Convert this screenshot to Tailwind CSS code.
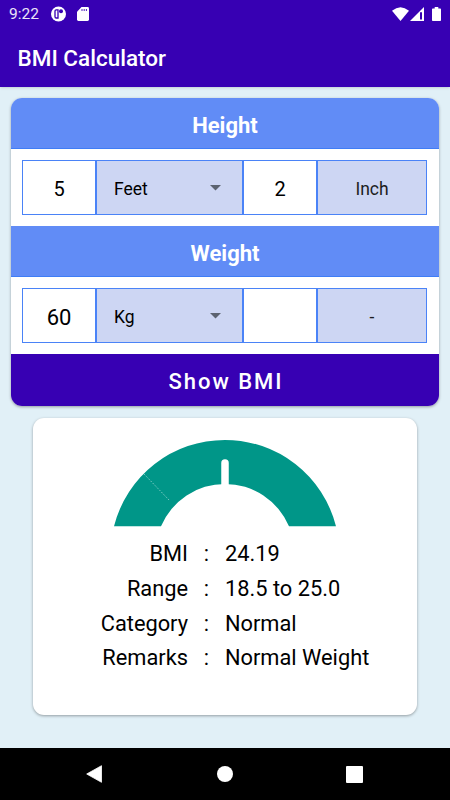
<!DOCTYPE html>
<html lang="en">
  <head>
    <meta charset="UTF-8" />
    <meta name="viewport" content="width=device-width, initial-scale=1.0" />
    <script src="https://cdn.jsdelivr.net/npm/@tailwindcss/browser@4"></script>
    <title>BMI Calculator</title>
  </head>
  <body class="font-[Roboto,sans-serif] bg-[#e1f0f7] text-black">
    <div class="flex flex-col w-[450px] h-[800px] overflow-hidden">
      <header class="h-[87px] shrink-0 bg-[#3700b3] text-white shadow-sm">
        <div class="flex items-center h-7 pl-[9px] pr-2">
          <span class="text-[15.5px] w-[41px] leading-7 text-white/90">9:22</span>
          <svg class="w-4 h-4" viewBox="0 0 16 16">
            <circle cx="8.5" cy="8" r="7.5" fill="#fff" />
            <path
              d="M8 3.8H6.2Q5 3.8 5 5V10.8Q5 12 6.2 12H8Z"
              fill="none"
              stroke="#3700b3"
              stroke-width="1.3"
            />
            <circle cx="11" cy="5.2" r="2" fill="#3700b3" />
          </svg>
          <svg class="w-3 h-[14px] ml-[11px]" viewBox="0 0 12 14">
            <path
              d="M4.5 0H10.6Q12 0 12 1.4V12.6Q12 14 10.6 14H1.4Q0 14 0 12.6V4.8Z"
              fill="#fff"
            />
            <path d="M5 2V4M7.2 2V4M9.4 2V4" stroke="#3700b3" stroke-width=".9" />
          </svg>
          <svg class="w-[17px] h-[14px] ml-auto" viewBox="0 0 17 14">
            <path d="M0 3.8Q8.5 -3.2 17 3.8L8.5 14Z" fill="#fff" />
          </svg>
          <svg class="w-[14px] h-[14px] ml-px" viewBox="0 0 14 14">
            <path d="M14 0V14H0Z" fill="#fff" />
            <path d="M10 5.2H12V12.5H10Z" fill="#3700b3" />
          </svg>
          <svg class="w-[9px] h-[14px] ml-2 mr-px" viewBox="0 0 9 14">
            <path
              d="M2.7 0H6.3V1.4H8.2Q9 1.4 9 2.2V13.2Q9 14 8.2 14H.8Q0 14 0 13.2V2.2Q0 1.4 .8 1.4H2.7Z"
              fill="#fff"
            />
          </svg>
        </div>
        <h1 class="pl-[17.5px] pt-[14px] text-[22.5px] leading-8 font-medium">
          BMI Calculator
        </h1>
      </header>

      <main class="flex flex-col items-center grow pt-[11px]">
        <section
          class="w-[428px] h-[308px] rounded-[11px] overflow-hidden bg-white shadow-[0_1px_3px_rgba(0,0,0,0.35)]"
        >
          <h2
            class="h-[51px] bg-[#618cf6] border-b border-[#3f7df6] text-white text-center text-[22px] leading-[55px] font-bold"
          >
            Height
          </h2>
          <div
            class="grid grid-cols-[74px_147px_74px_110px] h-[77px] px-[11px] py-[11px] *:border *:border-[#4a83f7] *:flex *:items-center *:pt-[3px]"
          >
            <div class="justify-center text-[20px]">5</div>
            <div class="justify-between pl-[17px] pr-[21px] bg-[#cdd6f3] text-[17.5px]">
              Feet
              <svg class="w-[11px] h-[6px] -mt-0.5" viewBox="0 0 11 6">
                <path d="M0 0H11L5.5 5.5Z" fill="#5c6370" />
              </svg>
            </div>
            <div class="justify-center text-[20px]">2</div>
            <div class="justify-center bg-[#cdd6f3] text-[17.5px] text-[#1c1d21]">Inch</div>
          </div>
          <h2
            class="h-[51px] bg-[#618cf6] border-b border-[#3f7df6] text-white text-center text-[22px] leading-[55px] font-bold"
          >
            Weight
          </h2>
          <div
            class="grid grid-cols-[74px_147px_74px_110px] h-[77px] px-[11px] py-[11px] *:border *:border-[#4a83f7] *:flex *:items-center *:pt-[3px]"
          >
            <div class="justify-center text-[22px]">60</div>
            <div class="justify-between pl-[17px] pr-[21px] bg-[#cdd6f3] text-[17.5px]">
              Kg
              <svg class="w-[11px] h-[6px] -mt-0.5" viewBox="0 0 11 6">
                <path d="M0 0H11L5.5 5.5Z" fill="#5c6370" />
              </svg>
            </div>
            <div></div>
            <div class="justify-center bg-[#cdd6f3] text-[17.5px] text-[#1c1d21]">-</div>
          </div>
          <button
            class="block w-full h-[52px] pl-0.5 bg-[#3700b3] text-white text-[22px] leading-[56px] font-medium tracking-[2px]"
          >
            Show BMI
          </button>
        </section>

        <section
          class="w-[384px] h-[297px] mt-3 rounded-[11px] bg-white shadow-[0_1px_3px_rgba(0,0,0,0.35)]"
        >
          <svg class="w-[224px] h-[88px] mt-[21px] mx-auto" viewBox="113 439 224 88">
            <!-- dial -->
            <path
              d="M114 526.3A114.5 114.5 0 0 1 336 526.3H289A69.5 69.5 0 0 0 161 526.3Z"
              fill="#009688"
            />
            <path
              d="M144 474L170 501"
              stroke="#fff"
              stroke-opacity=".8"
              stroke-width=".8"
              stroke-dasharray="1 1.5"
            />
            <!-- needle -->
            <path d="M225 463V488" stroke="#fff" stroke-width="7.5" stroke-linecap="round" />
          </svg>
          <div
            class="grid grid-cols-[155px_37px_1fr] auto-rows-[34.8px] mt-[9px] text-[21.8px] leading-[35px]"
          >
            <span class="text-right">BMI</span>
            <span class="text-center">:</span>
            <span>24.19</span>
            <span class="text-right">Range</span>
            <span class="text-center">:</span>
            <span>18.5 to 25.0</span>
            <span class="text-right">Category</span>
            <span class="text-center">:</span>
            <span>Normal</span>
            <span class="text-right">Remarks</span>
            <span class="text-center">:</span>
            <span>Normal Weight</span>
          </div>
        </section>
      </main>

      <nav class="flex items-center h-[52px] shrink-0 bg-black">
        <svg class="w-4 h-[18px] ml-[86px]" viewBox="0 0 16 18">
          <path d="M15.5 .7V17.3L.7 9Z" fill="#fff" stroke="#fff" stroke-width=".8" stroke-linejoin="round" />
        </svg>
        <div class="size-4 ml-[115px] rounded-full bg-white"></div>
        <div class="size-[17px] ml-[113px] rounded-[1px] bg-white"></div>
      </nav>
    </div>
  </body>
</html>
